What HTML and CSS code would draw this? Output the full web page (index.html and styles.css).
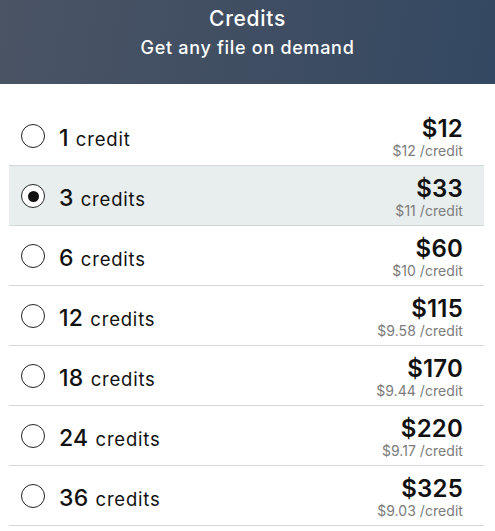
FILE: index.html
```html
<!DOCTYPE html>
<html>
<head>
<meta charset="utf-8">
<link rel="stylesheet" href="styles.css">
</head>
<body>
<header class="hero">
  <h1 class="title">Credits</h1>
  <p class="subtitle">Get any file on demand</p>
</header>
<ul class="plans">
  <li class="plan"><span class="radio"></span><span class="qty"><b>1</b> credit</span><span class="price"><span class="total">$12</span><span class="unit">$12 /credit</span></span></li>
  <li class="plan selected"><span class="radio"></span><span class="qty"><b>3</b> credits</span><span class="price"><span class="total">$33</span><span class="unit">$11 /credit</span></span></li>
  <li class="plan"><span class="radio"></span><span class="qty"><b>6</b> credits</span><span class="price"><span class="total">$60</span><span class="unit">$10 /credit</span></span></li>
  <li class="plan"><span class="radio"></span><span class="qty"><b>12</b> credits</span><span class="price"><span class="total">$115</span><span class="unit">$9.58 /credit</span></span></li>
  <li class="plan"><span class="radio"></span><span class="qty"><b>18</b> credits</span><span class="price"><span class="total">$170</span><span class="unit">$9.44 /credit</span></span></li>
  <li class="plan"><span class="radio"></span><span class="qty"><b>24</b> credits</span><span class="price"><span class="total">$220</span><span class="unit">$9.17 /credit</span></span></li>
  <li class="plan"><span class="radio"></span><span class="qty"><b>36</b> credits</span><span class="price"><span class="total">$325</span><span class="unit">$9.03 /credit</span></span></li>
</ul>
</body>
</html>
```
FILE: styles.css
```css
* { box-sizing: border-box; }
html, body { margin: 0; padding: 0; background: #fff; }
body { font-family: Inter, "Noto Sans", "DejaVu Sans", sans-serif; color: #111; overflow: hidden; }
.hero {
  height: 84px;
  background: linear-gradient(100deg, #4a5465 0%, #404e62 50%, #334862 100%);
  color: #fff;
  text-align: center;
  padding-top: 5px;
}
.title { margin: 0; font-size: 21px; font-weight: 500; line-height: 28px; letter-spacing: 0.7px; }
.subtitle { margin: 2px 0 0; font-size: 18px; font-weight: 500; line-height: 26px; letter-spacing: 0.7px; }
.plans { list-style: none; margin: 22px 11px 0 9px; padding: 0; }
.plan {
  display: flex;
  align-items: center;
  height: 60px;
  padding: 0 21px 0 12px;
  border-bottom: 1px solid #d3d7d7;
}
.plan.selected { background: #e8eded; }
.radio {
  width: 24px; height: 24px;
  border: 1.5px solid #222;
  border-radius: 50%;
  background: #fff;
  display: flex; align-items: center; justify-content: center;
  flex: none;
  margin-top: 1px;
}
.selected .radio::after {
  content: "";
  width: 11px; height: 11px; border-radius: 50%; background: #111;
}
.qty { margin-left: 14px; font-size: 18.5px; font-weight: 400; letter-spacing: 0.8px; padding-top: 4px; }
.qty b { font-size: 23px; font-weight: 500; margin-right: 1px; letter-spacing: 0.3px; }
.price { margin-left: auto; display: flex; flex-direction: column; align-items: flex-end; padding-top: 2px; }
.total { font-size: 24px; font-weight: 600; line-height: 28px; letter-spacing: 0.2px; }
.unit { font-size: 14px; color: #7c7c7c; line-height: 16px; letter-spacing: 0.05px; }
```
